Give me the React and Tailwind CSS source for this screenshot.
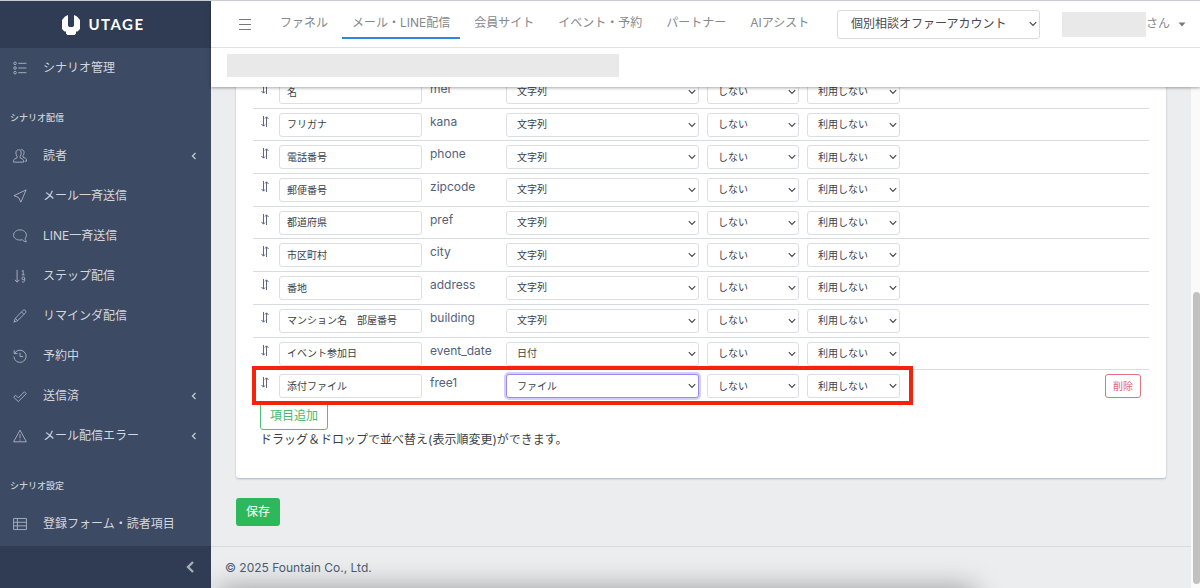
import { useState } from "react";

const mainItems = [
    { label: "読者", icon: "people", open: true },
    { label: "メール一斉送信", icon: "send" },
    { label: "LINE一斉送信", icon: "bubble" },
    { label: "ステップ配信", icon: "sort" },
    { label: "リマインダ配信", icon: "pencil" },
    { label: "予約中", icon: "history" },
    { label: "送信済", icon: "check", open: true },
    { label: "メール配信エラー", icon: "warning", open: true },
];

const tabs = ["ファネル", "メール・LINE配信", "会員サイト", "イベント・予約", "パートナー", "AIアシスト"];

const fields = [
    { label: "名", name: "mei", type: "文字列" },
    { label: "フリガナ", name: "kana", type: "文字列" },
    { label: "電話番号", name: "phone", type: "文字列" },
    { label: "郵便番号", name: "zipcode", type: "文字列" },
    { label: "都道府県", name: "pref", type: "文字列" },
    { label: "市区町村", name: "city", type: "文字列" },
    { label: "番地", name: "address", type: "文字列" },
    { label: "マンション名　部屋番号", name: "building", type: "文字列" },
    { label: "イベント参加日", name: "event_date", type: "日付" },
    { label: "添付ファイル", name: "free1", type: "ファイル", active: true },
];

const icons = {
    list: (
        <>
            <circle cx="3.5" cy="4" r="2.2" />
            <circle cx="3.5" cy="12" r="2.2" />
            <circle cx="3.5" cy="20" r="2.2" />
            <path d="M9 4h14M9 12h14M9 20h14" />
        </>
    ),
    people: (
        <>
            <path d="M9.500 1.500C6.500 1.500 5 3.500 5 7c0 2.500.8 4 2 5.500V15l-4.500 2.500C1.500 18 1 18.700 1 19.700V22.500h17v-2.800c0-1-.5-1.700-1.500-2.200L12 15v-2.500c1.200-1.500 2-3 2-5.500 0-3.500-1.500-5.500-4.500-5.500z" />
            <path d="M13 1.500c3.500-1 6 1 6 4.500 0 2.500-.8 4-2 5.500v2.300l4.500 2.200c1 .6 1.500 1.300 1.500 2.300V21h-3" />
        </>
    ),
    send: <path d="M22.500 1.500L1.500 11.500l8 3 4 8z" />,
    bubble: <path d="M12 1.500C6 1.500 1 5.500 1 10.500S6 19 12 19c1.500 0 2.800-.2 4-.6 1.700 2 3.800 3.500 6.800 3.600v-1.200c-1.500-1.200-2-2.800-1.800-4.800 1.200-1.400 2-3.400 2-5.500 0-5-5-9-11-9z" />,
    sort: (
        <>
            <path d="M7 1.500v21M3 18.500l4 4 4-4" />
            <path d="M15 4L17.500 2.500V10M15 10h5" />
            <path d="M20 16a2.400 2.400 0 1 1-4.800 0 2.400 2.400 0 0 1 4.800 0zM20 16v3.500c0 1.800-1 2.800-2.500 2.800h-2" />
        </>
    ),
    pencil: <path d="M17 2.500c1.200-1.200 3-1.200 4.200 0s1.200 3 0 4.200L8 20l-6.500 2.500L4 16zM14.500 5l4.300 4.300M4 16l4 4" />,
    history: (
        <>
            <path d="M2 2v6h6M2.500 8A10.500 10.500 0 1 1 1.500 13" />
            <path d="M12 6.500V13h5.500" />
        </>
    ),
    check: <path d="M1.200 14l3.300-3.300L9 15.200 19.500 4.700 22.800 8 9 21.500z" />,
    warning: <path d="M12 2L1 22h22zM12 9v7M12 18v2" />,
    table: <path d="M1 2.500h22v19H1zM1 9h22M1 15.200h22M7.500 2.500v19" />,
};

function Icon({ name }) {
    return (
        <svg viewBox="0 0 24 24" className="size-[14px] shrink-0 text-[#a9b1bf]" fill="none" stroke="currentColor" strokeWidth="1.6" strokeLinejoin="round" aria-hidden="true">
            {icons[name]}
        </svg>
    );
}

function SideItem({ item }) {
    return (
        <a href="#" className="flex h-10 items-center pl-[13px] pr-3.5 text-[#d3d7de]">
            <Icon name={item.icon} />
            <span className="ml-4 flex-1">{item.label}</span>
            {item.open && (
                <svg viewBox="0 0 6 8" className="h-2 w-[6px]" fill="none" stroke="#c3c9d3" strokeWidth="1.3" aria-hidden="true">
                    <path d="M4.500 1L1.500 4l3 3" />
                </svg>
            )}
        </a>
    );
}

function SideTitle({ children }) {
    return <h2 className="h-12 pl-2.5 pt-[22px] text-[9px] leading-4 font-medium text-[#cdd2da]">{children}</h2>;
}

function Dropdown({ label, value, active, large }) {
    return (
        <div className="relative">
            <select
                aria-label={label}
                defaultValue={value}
                className={
                    large
                        ? "block h-[29px] w-full appearance-none rounded-[3px] border border-[#d8dbe0] bg-white pl-[13px] text-xs text-[#4a4a4f] outline-none"
                        : active
                        ? "block h-6 w-full appearance-none rounded-[3px] border border-[#958bea] bg-white pl-2.5 text-[10px] text-[#3c3f48] ring-2 ring-[#d3cffa] outline-none"
                        : "block h-6 w-full appearance-none rounded-[3px] border border-[#dcdee3] bg-white pl-2.5 text-[10px] text-[#3c3f48] outline-none"
                }
            >
                <option>{value}</option>
            </select>
            <svg viewBox="0 0 8 6" className="pointer-events-none absolute top-1/2 right-[3px] h-[6px] w-2 -translate-y-1/2" fill="none" stroke="#444" strokeWidth="1.1" aria-hidden="true">
                <path d="M0.800 1.200L4 4.500l3.200-3.300" />
            </svg>
        </div>
    );
}

function FieldRow({ field, onDelete }) {
    return (
        <tr className="border-t border-[#d8dbe0] align-top">
            <td className="pt-[7px] pl-2">
                <svg viewBox="0 0 8 11" className="h-[11px] w-2" fill="none" stroke="#5f6880" strokeWidth="1" aria-label="並べ替え">
                    <path d="M2.500 0v10M0.500 8l2 2.200M2.500 10.200L4 8.500M5.500 11V1M4 2.500L5.500 0.800l2 2.200" />
                </svg>
            </td>
            <td className="px-1 pt-1 pb-[3px]">
                <input
                    aria-label={field.name}
                    defaultValue={field.label}
                    className="block h-6 w-full rounded-[3px] border border-[#dcdee3] px-[7px] pb-0.5 text-[10px] text-[#3c3f48] outline-none"
                />
            </td>
            <td className="px-1 pt-1 leading-[18px] text-[#555f7a]">{field.name}</td>
            <td className="px-1 pt-1">
                <Dropdown label="種別" value={field.type} active={field.active} />
            </td>
            <td className="px-1 pt-1">
                <Dropdown label="必須" value="しない" />
            </td>
            <td className="px-1 pt-1">
                <Dropdown label="利用" value="利用しない" />
            </td>
            <td className="pt-1 pr-2 text-right">
                {field.active && (
                    <button type="button" onClick={onDelete} className="h-6 w-9 rounded-[3px] border border-[#e0737b] text-[10px] text-[#e0636c]">
                        削除
                    </button>
                )}
            </td>
        </tr>
    );
}

function Sidebar() {
    return (
        <aside className="flex w-[211px] shrink-0 flex-col bg-[#3d4a63]">
            <div className="flex h-[47px] shrink-0 items-center justify-center gap-2 bg-[#2f3c53] pr-1 text-white">
                <svg viewBox="0 0 18 20" className="h-5 w-[18px]" fill="currentColor" aria-hidden="true">
                    <path d="M6 0v10.500l1 1.500h4l1-1.500V0l3 1.500L18 5v9l-2.500 2.500H14V18.500L12.500 20h-7L4 18.500V16.500H2.500L0 14V5l3-3.500z" />
                </svg>
                <span className="font-[Lato] text-[15px] font-bold tracking-widest">UTAGE</span>
            </div>
            <nav className="min-h-0 flex-1 overflow-hidden">
                <SideItem item={{ label: "シナリオ管理", icon: "list" }} />
                <SideTitle>シナリオ配信</SideTitle>
                {mainItems.map((item) => (
                    <SideItem key={item.label} item={item} />
                ))}
                <SideTitle>シナリオ設定</SideTitle>
                <SideItem item={{ label: "登録フォーム・読者項目", icon: "table" }} />
            </nav>
            <button type="button" aria-label="メニューを閉じる" className="flex h-[42px] shrink-0 items-center justify-end bg-[#2f3c53] pr-4">
                <svg viewBox="0 0 10 12" className="h-3 w-[10px]" fill="none" stroke="#a5aebb" strokeWidth="2.400" aria-hidden="true">
                    <path d="M8 1L3 6l5 5" />
                </svg>
            </button>
        </aside>
    );
}

function Header() {
    return (
        <header className="relative z-10 shrink-0 bg-white shadow-[0_1px_3px_rgba(0,0,0,0.35)]">
            <div className="flex h-[47px] items-center border-b border-[#dfe1e4] text-[#85888c]">
                <button type="button" aria-label="メニュー" className="ml-7 mr-[19px]">
                    <svg viewBox="0 0 12 12" className="size-3" stroke="#77797d" strokeWidth="1" aria-hidden="true">
                        <path d="M0 1.500h12M0 6.500h12M0 11.500h12" />
                    </svg>
                </button>
                <nav className="flex gap-1">
                    {tabs.map((tab, i) => (
                        <a
                            key={tab}
                            href="#"
                            className={
                                i === 1
                                    ? "border-b-2 border-[#2f86dc] px-2.5 pt-[3px] pb-1 leading-5 whitespace-nowrap"
                                    : "border-b-2 border-transparent px-2.5 pt-[3px] pb-1 leading-5 whitespace-nowrap"
                            }
                        >
                            {tab}
                        </a>
                    ))}
                </nav>
                <div className="ml-auto w-[203px] shrink-0">
                    <Dropdown label="アカウント" value="個別相談オファーアカウント" large />
                </div>
                <button type="button" className="mr-3.5 ml-[22px] flex shrink-0 items-center">
                    <span className="h-[25px] w-[84px] bg-[#e9e9e9]" />
                    さん
                    <svg viewBox="0 0 8 5" className="ml-2 h-[5px] w-2" fill="#77797d" aria-hidden="true">
                        <path d="M0.500 0.500h7L4 4.500z" />
                    </svg>
                </button>
            </div>
            <div className="flex h-[39px] items-center pl-4">
                <div className="mb-1 h-[23px] w-[392px] bg-[#e9e9e9]" />
            </div>
        </header>
    );
}

function App() {
    const [rows, setRows] = useState(fields);

    return (
        <div className="flex h-screen overflow-hidden border-t border-[#c9cdd1] bg-[#ebedef] font-['Inter','Noto_Sans_CJK_JP',sans-serif] text-xs text-[#4f5d73]">
            <Sidebar />
            <div className="flex min-w-0 flex-1 flex-col">
                <Header />
                <div className="flex min-h-0 flex-1">
                    {/* page body, scrolled to its end */}
                    <div className="flex min-w-0 flex-1 flex-col justify-end overflow-hidden">
                        <main className="px-[25px] pb-5">
                            <section className="rounded-[3px] bg-white px-[17px] pb-7 shadow-[0_1px_2px_#aab4c8]">
                                <div className="relative">
                                    <table className="h-[327px] w-full table-fixed border-collapse">
                                        <colgroup>
                                            <col className="w-[22px]" />
                                            <col className="w-[151px]" />
                                            <col className="w-[76px]" />
                                            <col className="w-[201px]" />
                                            <col className="w-[100px]" />
                                            <col className="w-[101px]" />
                                            <col />
                                        </colgroup>
                                        <tbody>
                                            {rows.map((field) => (
                                                <FieldRow key={field.name} field={field} onDelete={() => setRows(rows.filter((r) => r !== field))} />
                                            ))}
                                        </tbody>
                                    </table>
                                    <div className="pointer-events-none absolute -bottom-[3px] -left-px h-[39px] w-[661px] border-4 border-[#f5230b]" />
                                </div>
                                <div className="pl-[7px]">
                                    <button type="button" className="block h-7 rounded-[3px] border border-[#4fc27a] px-[9px] text-[#45b96f]">
                                        項目追加
                                    </button>
                                    <p className="leading-5 text-[#3c3f48]">ドラッグ＆ドロップで並べ替え(表示順変更)ができます。</p>
                                </div>
                            </section>
                            <button type="button" className="mt-5 block h-7 rounded-[3px] bg-[#2eb85c] px-2.5 text-white">
                                保存
                            </button>
                        </main>
                        <footer className="relative flex h-[42px] shrink-0 items-center overflow-hidden border-t border-[#d8dbe0] px-3.5">
                            © 2025 Fountain Co., Ltd.
                            {/* shade rising from the bottom edge */}
                            <div className="pointer-events-none absolute top-full right-[216px] left-2 h-8 shadow-[0_0_28px_rgba(0,0,0,0.35)]" />
                        </footer>
                    </div>
                    <div className="flex w-[9px] shrink-0 flex-col justify-end bg-[#fafafa] pb-1 pl-[2px]">
                        <div className="h-[292px] rounded-full bg-[#c1c1c1]" />
                    </div>
                </div>
            </div>
        </div>
    );
}

export default App;
